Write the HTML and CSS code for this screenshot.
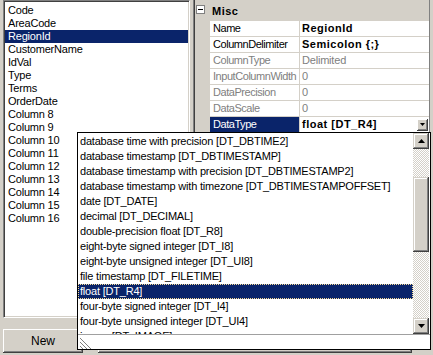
FILE: index.html
```html
<!DOCTYPE html>
<html>
<head>
<meta charset="utf-8">
<link rel="stylesheet" href="styles.css">
</head>
<body>
<div class="app">
  <div class="main">
    <div class="listbox">
      <div class="li">Code</div>
      <div class="li">AreaCode</div>
      <div class="li sel">RegionId</div>
      <div class="li">CustomerName</div>
      <div class="li">IdVal</div>
      <div class="li">Type</div>
      <div class="li">Terms</div>
      <div class="li">OrderDate</div>
      <div class="li">Column 8</div>
      <div class="li">Column 9</div>
      <div class="li">Column 10</div>
      <div class="li">Column 11</div>
      <div class="li">Column 12</div>
      <div class="li">Column 13</div>
      <div class="li">Column 14</div>
      <div class="li">Column 15</div>
      <div class="li">Column 16</div>
    </div>
    <div class="grid">
      <div class="cat">
        <span class="toggle"><span class="minus"></span></span>
        <span class="cat-name">Misc</span>
      </div>
      <div class="rows">
        <div class="row"><div class="pname">Name</div><div class="pval bold">RegionId</div></div>
        <div class="row"><div class="pname">ColumnDelimiter</div><div class="pval bold">Semicolon {;}</div></div>
        <div class="row dis"><div class="pname">ColumnType</div><div class="pval">Delimited</div></div>
        <div class="row dis"><div class="pname">InputColumnWidth</div><div class="pval">0</div></div>
        <div class="row dis"><div class="pname">DataPrecision</div><div class="pval">0</div></div>
        <div class="row dis"><div class="pname">DataScale</div><div class="pval">0</div></div>
        <div class="row"><div class="pname active">DataType</div><div class="pval bold combo"><span>float [DT_R4]</span><span class="combo-btn"><svg width="5" height="3" viewBox="0 0 5 3"><polygon points="0,0 5,0 2.5,3" fill="#000"/></svg></span></div></div>
      </div>
    </div>
  </div>
  <div class="buttons">
    <div class="btn btn-new">New</div>
    <div class="btn btn-wide">Delete</div>
  </div>
  <div class="dropdown">
    <div class="dd-main">
      <div class="dd-items">
        <div class="dd-item">database time with precision [DT_DBTIME2]</div>
        <div class="dd-item">database timestamp [DT_DBTIMESTAMP]</div>
        <div class="dd-item">database timestamp with precision [DT_DBTIMESTAMP2]</div>
        <div class="dd-item">database timestamp with timezone [DT_DBTIMESTAMPOFFSET]</div>
        <div class="dd-item">date [DT_DATE]</div>
        <div class="dd-item">decimal [DT_DECIMAL]</div>
        <div class="dd-item">double-precision float [DT_R8]</div>
        <div class="dd-item">eight-byte signed integer [DT_I8]</div>
        <div class="dd-item">eight-byte unsigned integer [DT_UI8]</div>
        <div class="dd-item">file timestamp [DT_FILETIME]</div>
        <div class="dd-item sel">float [DT_R4]</div>
        <div class="dd-item">four-byte signed integer [DT_I4]</div>
        <div class="dd-item">four-byte unsigned integer [DT_UI4]</div>
        <div class="dd-item">image [DT_IMAGE]</div>
      </div>
      <div class="scrollbar">
        <div class="sb-btn"><svg width="7" height="4" viewBox="0 0 7 4"><polygon points="3.5,0 7,4 0,4" fill="#000"/></svg></div>
        <div class="sb-track t1"></div>
        <div class="sb-thumb"></div>
        <div class="sb-track t2"></div>
        <div class="sb-btn"><svg width="7" height="4" viewBox="0 0 7 4"><polygon points="0,0 7,0 3.5,4" fill="#000"/></svg></div>
      </div>
    </div>
    <div class="dd-foot">
      <svg class="grip" width="12" height="12" viewBox="0 0 12 12">
        <line x1="0" y1="1" x2="11" y2="12" stroke="#808080" stroke-width="1"/>
        <line x1="0" y1="2" x2="10" y2="12" stroke="#ffffff" stroke-width="1"/>
        <line x1="0" y1="5" x2="7" y2="12" stroke="#808080" stroke-width="1"/>
        <line x1="0" y1="6" x2="6" y2="12" stroke="#ffffff" stroke-width="1"/>
        <line x1="0" y1="9" x2="3" y2="12" stroke="#808080" stroke-width="1"/>
      </svg>
    </div>
  </div>
</div>
</body>
</html>
```

FILE: styles.css
```css
* { box-sizing: border-box; }
html, body { margin: 0; padding: 0; }
body {
  width: 433px;
  height: 355px;
  overflow: hidden;
  background: #d4d0c8;
  font-family: "Liberation Sans", Arial, sans-serif;
  font-size: 11px;
  letter-spacing: -0.2px;
  color: #000;
}
.app { position: relative; width: 433px; height: 355px; }

.main { display: flex; gap: 3px; padding-left: 3px; height: 325px; }

.listbox {
  width: 187px;
  height: 318px;
  background: #fff;
  border: 1px solid;
  border-color: #808080 #fff #fff #808080;
  box-shadow: inset 1px 1px #404040, inset -1px -1px #d4d0c8;
  padding: 3px 1px 1px 1px;
  overflow: hidden;
}
.li { height: 13px; line-height: 13px; padding-left: 3px; white-space: nowrap; }
.li.sel { background: #0a246a; color: #fff; }

.grid {
  width: 237px;
  height: 325px;
  border-left: 1px solid #808080;
  border-right: 1px solid #808080;
  box-shadow: inset 1px 0 #404040;
  padding-left: 16px;
}
.cat {
  height: 21px;
  display: flex;
  align-items: center;
  margin-left: -14px;
  font-weight: bold;
  letter-spacing: 0.5px;
}
.toggle {
  width: 9px;
  height: 9px;
  border: 1px solid #808080;
  background: #fff;
  display: flex;
  align-items: center;
  justify-content: center;
  margin-top: -3px;
}
.minus { width: 5px; height: 1px; background: #000; }
.cat-name { margin-left: 7px; }

.rows { display: flex; flex-direction: column; gap: 1px; }
.row {
  display: grid;
  grid-template-columns: 89px 1fr;
  column-gap: 1px;
  height: 15px;
  line-height: 15px;
}
.pname, .pval { background: #fff; white-space: nowrap; overflow: hidden; }
.pname { padding-left: 3px; letter-spacing: -0.45px; }
.pval { padding-left: 2px; }
.pname.active { background: #0a246a; color: #fff; }
.row.dis { color: #808080; }
.bold { font-weight: bold; letter-spacing: 0.5px; }
.combo { display: flex; justify-content: space-between; align-items: center; padding-right: 1px; }
.combo-btn {
  width: 11px;
  height: 12px;
  background: #d4d0c8;
  box-shadow: inset -1px -1px #404040, inset 1px 1px #fff, inset -2px -2px #808080;
  display: flex;
  align-items: center;
  justify-content: center;
}

.buttons { display: flex; gap: 15px; padding-left: 3px; margin-top: 4px; }
.btn {
  height: 24px;
  background: #d4d0c8;
  box-shadow: inset -1px -1px #404040, inset 1px 1px #fff, inset -2px -2px #808080;
  display: flex;
  align-items: center;
  justify-content: center;
  font-size: 12px;
  letter-spacing: 0;
}
.btn-new { width: 80px; }
.btn-wide { width: 314px; }

.dropdown {
  position: absolute;
  left: 77px;
  top: 132px;
  width: 354px;
  height: 218px;
  border: 1px solid #000;
  background: #fff;
  display: flex;
  flex-direction: column;
}
.dd-main { display: flex; height: 201px; }
.dd-items { flex: 1; padding-top: 1px; overflow: hidden; }
.dd-item { height: 15px; line-height: 15px; padding-left: 2px; white-space: nowrap; }
.dd-item.sel {
  background: #0a246a;
  color: #fff;
  outline: 1px dotted #f5db95;
  outline-offset: -1px;
}
.scrollbar { width: 16px; margin-right: 1px; display: flex; flex-direction: column; }
.sb-btn {
  height: 16px;
  background: #d4d0c8;
  box-shadow: inset -1px -1px #404040, inset 1px 1px #d4d0c8, inset -2px -2px #808080, inset 2px 2px #fff;
  display: flex;
  align-items: center;
  justify-content: center;
}
.sb-track {
  background: repeating-conic-gradient(#d4d0c8 0 25%, #fff 0 50%) 0 0 / 2px 2px;
}
.t1 { height: 28px; }
.t2 { flex: 1; }
.sb-thumb {
  height: 75px;
  background: #d4d0c8;
  box-shadow: inset -1px -1px #404040, inset 1px 1px #d4d0c8, inset -2px -2px #808080, inset 2px 2px #fff;
}
.dd-foot { height: 15px; border-top: 1px solid #a0a0a0; display: flex; align-items: flex-end; padding-left: 2px; }
.grip { display: block; }
```
